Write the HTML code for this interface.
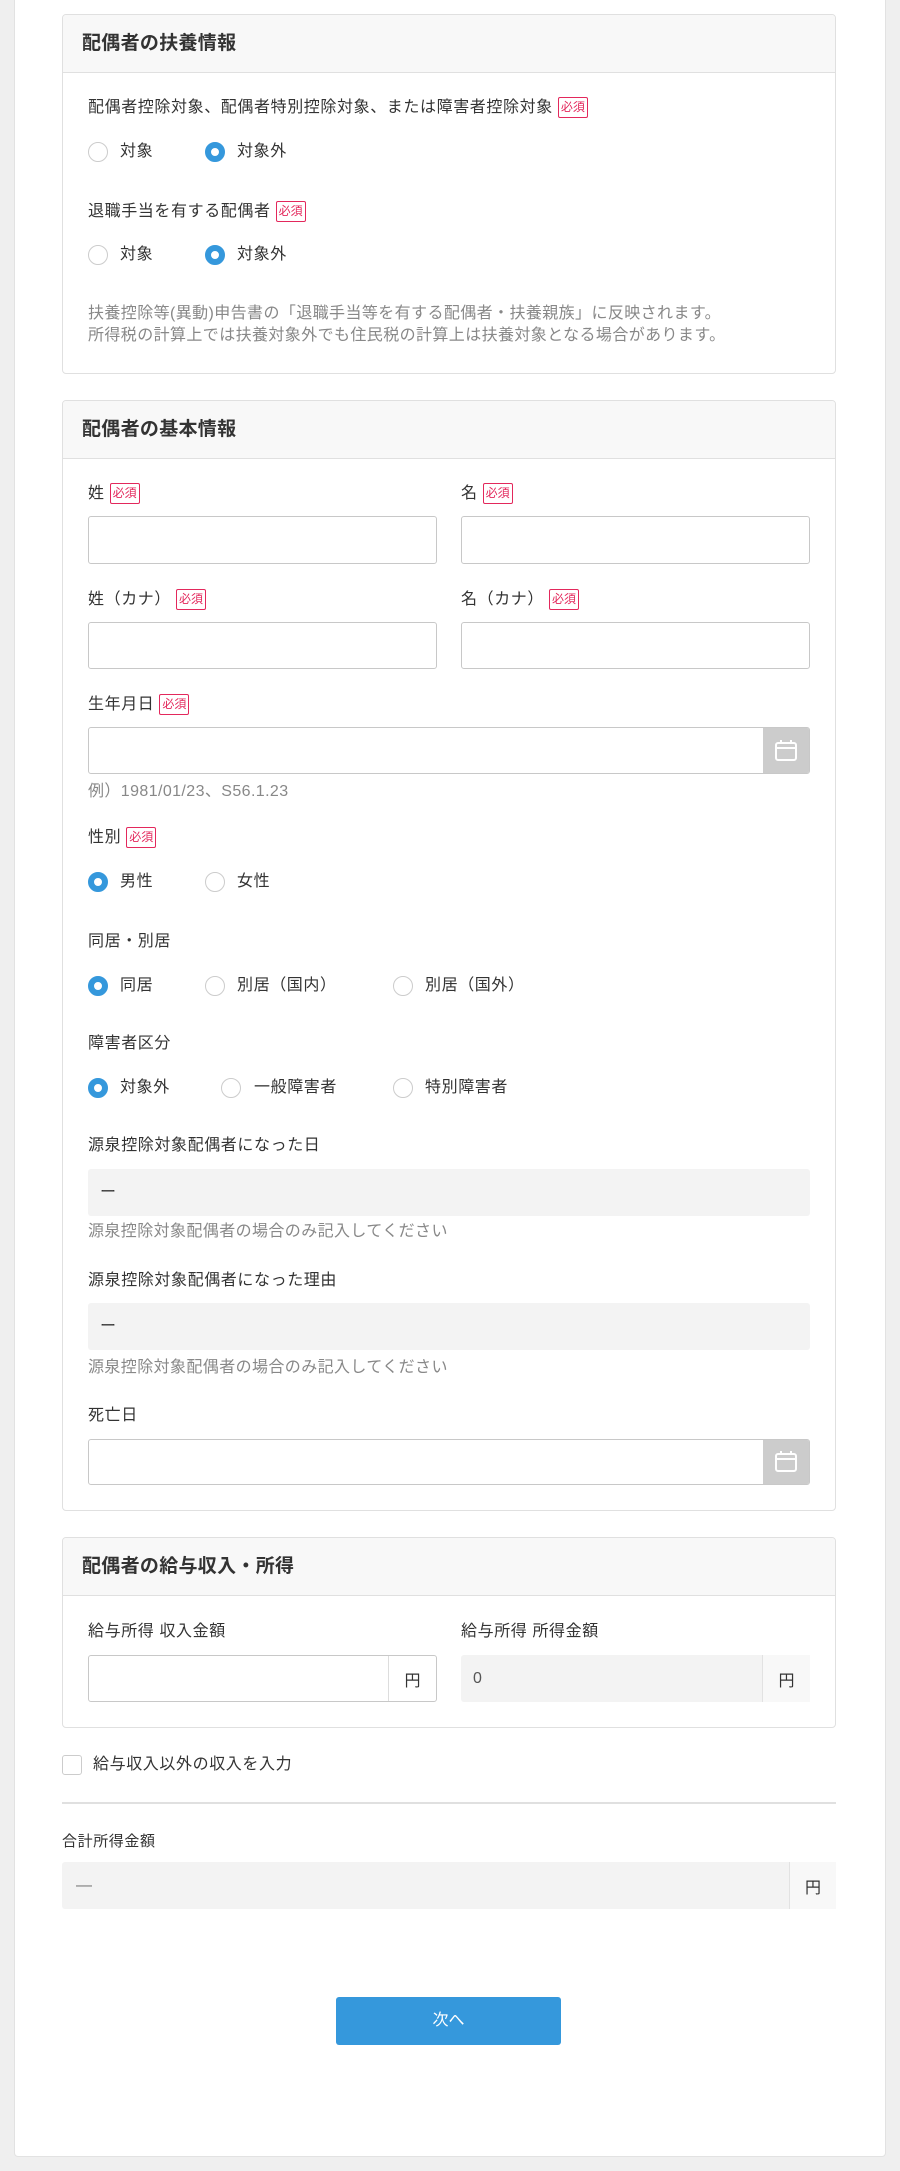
<!DOCTYPE html>
<html><head><meta charset="utf-8"><style>
*{box-sizing:border-box;margin:0;padding:0}
body{width:900px;height:2171px;background:#efefef;font-family:"Liberation Sans","Noto Sans CJK JP",sans-serif;color:#333;position:relative;overflow:hidden}
.panel{position:absolute;left:14px;top:-5px;width:872px;height:2162px;background:#fff;border:1px solid #e2e2e2;border-radius:4px}
.a{position:absolute}
.card{position:absolute;left:62px;width:774px;border:1px solid #e0e0e0;border-radius:4px;background:#fff;overflow:hidden}
.card .hd{height:58px;background:#f8f8f8;border-bottom:1px solid #e0e0e0;font-weight:bold;font-size:19px;line-height:58px;padding-left:19px;color:#333;letter-spacing:0.3px}
.lbl{position:absolute;font-size:16px;line-height:22px;white-space:nowrap;letter-spacing:0.6px}
.req{display:inline-block;border:1px solid #e3285c;color:#e3285c;font-size:12px;line-height:18px;height:21px;padding:0 2px;border-radius:2px;vertical-align:1px;margin-left:5px;letter-spacing:0}
.r{position:absolute;width:20px;height:20px;border-radius:50%;border:1.5px solid #ccc;background:#fff}
.r.on{border:6px solid #3598dc;background:#fff}
.rt{position:absolute;font-size:16px;line-height:22px;white-space:nowrap;letter-spacing:0.6px}
.inp{position:absolute;border:1px solid #c8c8c8;border-radius:3px;background:#fff}
.gry{position:absolute;background:#f3f3f3;border-radius:3px}
.hint{position:absolute;font-size:16px;color:#888;line-height:20px;white-space:nowrap;letter-spacing:0.4px}
.cal{position:absolute;right:0;top:0;bottom:0;width:46px;background:#ccc;display:flex;align-items:center;justify-content:center}
.addon{position:absolute;right:0;top:0;bottom:0;width:48px;border-left:1px solid #ddd;font-size:16px;display:flex;align-items:center;justify-content:center}
.gv{position:absolute;left:12px;top:0;line-height:47px;font-size:16px}
</style></head><body>
<div class="panel"></div>

<div class="card" style="top:14px;height:360px"><div class="hd">配偶者の扶養情報</div></div>
<div class="lbl" style="left:88px;top:97px">配偶者控除対象、配偶者特別控除対象、または障害者控除対象<span class="req">必須</span></div>
<div class="r" style="left:88px;top:142px"></div><div class="rt" style="left:120px;top:141px">対象</div>
<div class="r on" style="left:205px;top:142px"></div><div class="rt" style="left:237px;top:141px">対象外</div>
<div class="lbl" style="left:88px;top:201px">退職手当を有する配偶者<span class="req">必須</span></div>
<div class="r" style="left:88px;top:245px"></div><div class="rt" style="left:120px;top:244px">対象</div>
<div class="r on" style="left:205px;top:245px"></div><div class="rt" style="left:237px;top:244px">対象外</div>
<div class="hint" style="left:88px;top:303px;line-height:22px">扶養控除等(異動)申告書の「退職手当等を有する配偶者・扶養親族」に反映されます。<br>所得税の計算上では扶養対象外でも住民税の計算上は扶養対象となる場合があります。</div>

<div class="card" style="top:400px;height:1111px"><div class="hd">配偶者の基本情報</div></div>
<div class="lbl" style="left:88px;top:483px">姓<span class="req">必須</span></div>
<div class="lbl" style="left:461px;top:483px">名<span class="req">必須</span></div>
<div class="inp" style="left:88px;top:516px;width:349px;height:48px"></div>
<div class="inp" style="left:461px;top:516px;width:349px;height:48px"></div>
<div class="lbl" style="left:88px;top:589px">姓（カナ）<span class="req">必須</span></div>
<div class="lbl" style="left:461px;top:589px">名（カナ）<span class="req">必須</span></div>
<div class="inp" style="left:88px;top:622px;width:349px;height:47px"></div>
<div class="inp" style="left:461px;top:622px;width:349px;height:47px"></div>
<div class="lbl" style="left:88px;top:694px">生年月日<span class="req">必須</span></div>
<div class="inp" style="left:88px;top:727px;width:722px;height:47px;overflow:hidden"><div class="cal"><svg width="26" height="26" viewBox="0 0 26 26" fill="none" stroke="#fff" stroke-width="2"><rect x="3" y="5" width="20" height="17" rx="2"/><line x1="3" y1="10" x2="23" y2="10"/><line x1="8" y1="2" x2="8" y2="6"/><line x1="18" y1="2" x2="18" y2="6"/></svg></div></div>
<div class="hint" style="left:88px;top:782px">例）1981/01/23、S56.1.23</div>
<div class="lbl" style="left:88px;top:827px">性別<span class="req">必須</span></div>
<div class="r on" style="left:88px;top:872px"></div><div class="rt" style="left:120px;top:871px">男性</div>
<div class="r" style="left:205px;top:872px"></div><div class="rt" style="left:237px;top:871px">女性</div>
<div class="lbl" style="left:88px;top:931px">同居・別居</div>
<div class="r on" style="left:88px;top:976px"></div><div class="rt" style="left:120px;top:975px">同居</div>
<div class="r" style="left:205px;top:976px"></div><div class="rt" style="left:237px;top:975px">別居（国内）</div>
<div class="r" style="left:393px;top:976px"></div><div class="rt" style="left:425px;top:975px">別居（国外）</div>
<div class="lbl" style="left:88px;top:1033px">障害者区分</div>
<div class="r on" style="left:88px;top:1078px"></div><div class="rt" style="left:120px;top:1077px">対象外</div>
<div class="r" style="left:221px;top:1078px"></div><div class="rt" style="left:254px;top:1077px">一般障害者</div>
<div class="r" style="left:393px;top:1078px"></div><div class="rt" style="left:425px;top:1077px">特別障害者</div>
<div class="lbl" style="left:88px;top:1135px">源泉控除対象配偶者になった日</div>
<div class="gry" style="left:88px;top:1169px;width:722px;height:47px"><span class="gv">ー</span></div>
<div class="hint" style="left:88px;top:1222px">源泉控除対象配偶者の場合のみ記入してください</div>
<div class="lbl" style="left:88px;top:1270px">源泉控除対象配偶者になった理由</div>
<div class="gry" style="left:88px;top:1303px;width:722px;height:47px"><span class="gv">ー</span></div>
<div class="hint" style="left:88px;top:1358px">源泉控除対象配偶者の場合のみ記入してください</div>
<div class="lbl" style="left:88px;top:1405px">死亡日</div>
<div class="inp" style="left:88px;top:1439px;width:722px;height:46px;overflow:hidden"><div class="cal"><svg width="26" height="26" viewBox="0 0 26 26" fill="none" stroke="#fff" stroke-width="2"><rect x="3" y="5" width="20" height="17" rx="2"/><line x1="3" y1="10" x2="23" y2="10"/><line x1="8" y1="2" x2="8" y2="6"/><line x1="18" y1="2" x2="18" y2="6"/></svg></div></div>

<div class="card" style="top:1537px;height:191px"><div class="hd">配偶者の給与収入・所得</div></div>
<div class="lbl" style="left:88px;top:1621px">給与所得 収入金額</div>
<div class="lbl" style="left:461px;top:1621px">給与所得 所得金額</div>
<div class="inp" style="left:88px;top:1655px;width:349px;height:47px"><div class="addon">円</div></div>
<div class="gry" style="left:461px;top:1655px;width:349px;height:47px"><span class="gv" style="color:#555">0</span><div class="addon" style="border-left:1px solid #e2e2e2;background:#f8f8f8">円</div></div>

<div class="a" style="left:62px;top:1755px;width:20px;height:20px;border:1.5px solid #ccc;border-radius:3px"></div>
<div class="lbl" style="left:93px;top:1754px">給与収入以外の収入を入力</div>
<div class="a" style="left:62px;top:1802px;width:774px;height:2px;background:#e0e0e0"></div>
<div class="lbl" style="left:62px;top:1831px;font-size:15px">合計所得金額</div>
<div class="gry" style="left:62px;top:1862px;width:774px;height:47px"><span class="gv" style="left:14px;color:#777">—</span><div class="addon" style="border-left:1px solid #e2e2e2;background:#f8f8f8;width:47px">円</div></div>

<div class="a" style="left:336px;top:1997px;width:225px;height:48px;background:#3598dc;border-radius:3px;color:#fff;font-size:16px;line-height:48px;text-align:center">次へ</div>
</body></html>
